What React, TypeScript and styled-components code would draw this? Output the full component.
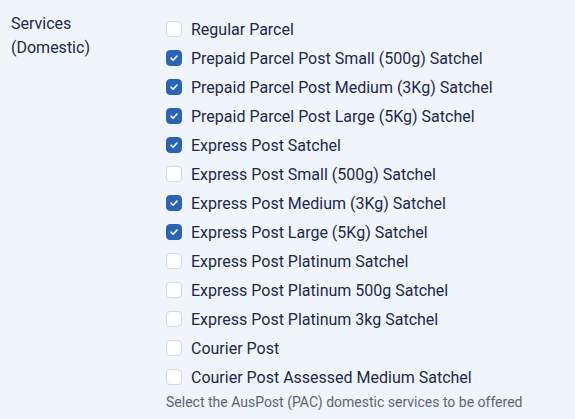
import * as React from 'react'
import styled, { createGlobalStyle } from 'styled-components'

const GlobalStyle = createGlobalStyle`
  html, body {
    margin: 0;
    padding: 0;
    background: #f0f4fb;
  }
  body {
    font-family: Roboto, 'Liberation Sans', Arial, sans-serif;
    color: #1b2a4a;
  }
`

const services = [
  { name: 'Regular Parcel', checked: false },
  { name: 'Prepaid Parcel Post Small (500g) Satchel', checked: true },
  { name: 'Prepaid Parcel Post Medium (3Kg) Satchel', checked: true },
  { name: 'Prepaid Parcel Post Large (5Kg) Satchel', checked: true },
  { name: 'Express Post Satchel', checked: true },
  { name: 'Express Post Small (500g) Satchel', checked: false },
  { name: 'Express Post Medium (3Kg) Satchel', checked: true },
  { name: 'Express Post Large (5Kg) Satchel', checked: true },
  { name: 'Express Post Platinum Satchel', checked: false },
  { name: 'Express Post Platinum 500g Satchel', checked: false },
  { name: 'Express Post Platinum 3kg Satchel', checked: false },
  { name: 'Courier Post', checked: false },
  { name: 'Courier Post Assessed Medium Satchel', checked: false },
]

const FieldRow = styled.div`
  display: grid;
  grid-template-columns: 155px 1fr;
  padding: 12px 0 0 11px;
`

const FieldLabel = styled.div`
  font-size: 16px;
  line-height: 24px;
`

const Options = styled.div`
  display: flex;
  flex-direction: column;
  padding-top: 3px;
`

const Option = styled.label`
  display: flex;
  align-items: center;
  gap: 9px;
  height: 29px;
  font-size: 16px;
  cursor: pointer;
`

const Box = styled.span<{ $checked: boolean }>`
  width: 16px;
  height: 16px;
  box-sizing: border-box;
  border-radius: 4px;
  display: flex;
  align-items: center;
  justify-content: center;
  background: ${(p) => (p.$checked ? '#2b64b5' : '#ffffff')};
  border: 1px solid ${(p) => (p.$checked ? '#2b64b5' : '#d3d9e3')};
  margin-bottom: 1px;
`

const Help = styled.div`
  font-size: 14px;
  color: #5d6573;
  margin-top: 2px;
`

export default function App() {
  const [items, setItems] = React.useState(services)

  const toggle = (i: number) => {
    setItems(items.map((s, j) => (j === i ? { ...s, checked: !s.checked } : s)))
  }

  return (
    <>
      <GlobalStyle />
      <FieldRow>
        <FieldLabel>
          Services
          <br />
          (Domestic)
        </FieldLabel>
        <Options>
          {items.map((s, i) => (
            <Option key={s.name} onClick={() => toggle(i)}>
              <Box $checked={s.checked}>
                {s.checked && (
                  <svg width="10" height="10" viewBox="0 0 10 10">
                    <path
                      d="M2 5.2 L4.1 7.2 L8 3"
                      fill="none"
                      stroke="#fff"
                      strokeWidth="1.6"
                      strokeLinecap="round"
                      strokeLinejoin="round"
                    />
                  </svg>
                )}
              </Box>
              {s.name}
            </Option>
          ))}
          <Help>Select the AusPost (PAC) domestic services to be offered</Help>
        </Options>
      </FieldRow>
    </>
  )
}
